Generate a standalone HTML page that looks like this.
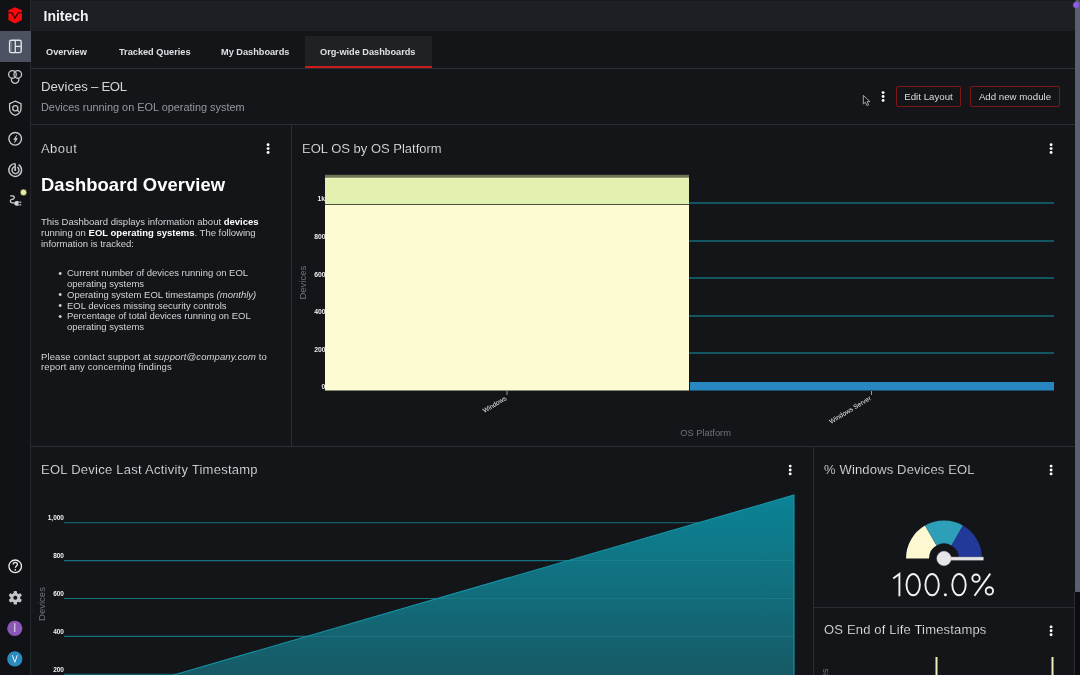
<!DOCTYPE html>
<html><head><meta charset="utf-8">
<style>
*{box-sizing:border-box;margin:0;padding:0}
body{will-change:transform}
html,body{width:1080px;height:675px;overflow:hidden;background:#131519;font-family:"Liberation Sans",sans-serif;color:#e6e7e9}
.abs{position:absolute}
#side{left:0;top:0;width:30px;height:675px;background:#101215}
#sideb{left:30px;top:0;width:1px;height:675px;background:#24272b}
#hdr{left:31px;top:0;width:1044px;height:31px;background:#1e1f24;border-top:1px solid #16171b}
#tabs{left:31px;top:31px;width:1044px;height:38px;background:#131519;border-bottom:1px solid #2b2e33}
.tab{position:absolute;top:46.8px;font-size:9.2px;font-weight:bold;color:#dfe0e3;white-space:nowrap}
#acttab{left:304.5px;top:36px;width:127px;height:32px;background:#1f2125;border-bottom:2px solid #cc1b1b}
.hl{position:absolute;height:1px;background:#2a2d31}
.vl{position:absolute;width:1px;background:#2a2d31}
.t{position:absolute;white-space:nowrap}
.ptitle{font-size:13px;color:#eeeff1;-webkit-text-stroke:0.22px #131519}
.kebab{position:absolute;width:3px}
.kebab i{display:block;width:2.6px;height:2.6px;border-radius:50%;background:#fff;margin-bottom:1.3px}
.btn{position:absolute;top:86px;height:21px;border:1.5px solid #7d1717;border-radius:2px;font-size:9.7px;color:#dcdde0;text-align:center;line-height:19px}
#scroll{left:1074.5px;top:0;width:5.5px;height:593px;background:#5b6070;border-radius:2px 2px 2px 2px}
#scrolltrack{left:1075px;top:592px;width:5px;height:83px;background:#0c0d10}
.body{font-size:9.5px;color:#d4d5d8;line-height:10.85px}
.body b{color:#fff}
.ylab{position:absolute;font-size:7px;font-weight:bold;color:#eee;text-align:right;width:30px}
</style></head><body>
<div id="side" class="abs"></div>
<div id="sideb" class="abs"></div>
<div class="abs" style="left:0;top:31px;width:31px;height:31px;background:#4d5263"></div>
<svg class="abs" style="left:0;top:0" width="30" height="675" viewBox="0 0 30 675">
  <!-- logo -->
  <path d="M15.1,7.2 L21.9,10.3 L21.9,19.9 L15.1,23.5 L8.4,19.9 L8.4,10.3 Z" fill="#fa0b0b"/>
  <path d="M8.4,12.7 L12.3,12.7 M17.9,12.7 L21.9,12.7" stroke="#2c0909" stroke-width="1"/>
  <path d="M12,12.9 L14.9,18.2 L18,12.9" fill="none" stroke="#2c0909" stroke-width="1.3"/>
  <rect x="14.4" y="9.6" width="1.3" height="5.6" fill="#fa0b0b"/>
  <!-- dashboard icon -->
  <rect x="9.6" y="40.2" width="11.6" height="12.4" rx="1.6" fill="none" stroke="#e4e5e8" stroke-width="1.4"/>
  <line x1="15.3" y1="40.2" x2="15.3" y2="52.6" stroke="#e4e5e8" stroke-width="1.3"/>
  <line x1="15.3" y1="46.4" x2="21.2" y2="46.4" stroke="#e4e5e8" stroke-width="1.3"/>
  <line x1="11.3" y1="41.5" x2="11.3" y2="51.5" stroke="#e4e5e8" stroke-width="0.6" opacity="0.5"/>
  <!-- rings -->
  <g fill="none" stroke="#c9cacd" stroke-width="1.3">
    <circle cx="12.45" cy="74.45" r="3.8"/>
    <circle cx="17.75" cy="74.45" r="3.8"/>
    <path d="M11.59,78.15 A3.8,3.8 0 1 0 18.61,78.15"/>
  </g>
  <!-- shield -->
  <g fill="none" stroke="#c9cacd" stroke-width="1.3">
    <path d="M15.3,101.2 L21,103.6 L21,108.5 C21,111.8 18.6,114.2 15.3,115.4 C12,114.2 9.6,111.8 9.6,108.5 L9.6,103.6 Z"/>
    <circle cx="15.3" cy="108.2" r="2.6"/>
    <path d="M17.3,110.2 L19,111.8"/>
  </g>
  <!-- bolt -->
  <circle cx="15.2" cy="138.8" r="6.3" fill="none" stroke="#c9cacd" stroke-width="1.4"/>
  <path d="M16.9,135.2 L13.7,139.5 L15.6,139.5 L14.5,142.6 L16.9,139.5 L17.1,138.1 L15.2,138.1 L16.9,135.2 Z" fill="#c9cacd" stroke="#c9cacd" stroke-width="0.6" stroke-linejoin="round"/>
  <!-- radar -->
  <g fill="none" stroke="#c9cacd" stroke-width="1.4">
    <path d="M18.6,164.6 A6.4,6.4 0 1 1 15.2,163.6"/>
    <path d="M17.3,167.1 A3.5,3.5 0 1 1 15.2,166.6"/>
    <line x1="15.2" y1="163.6" x2="15.2" y2="170"/>
  </g>
  <circle cx="15.2" cy="170" r="1.1" fill="#c9cacd"/>
  <!-- plug -->
  <path d="M10.2,195.8 L12.4,195.8 C13.9,195.8 14.4,196.8 14.2,197.8 C14,198.9 13.2,199.3 12,199.4 C10.8,199.5 10.3,200.2 10.3,201.1 C10.3,202.2 11,202.8 12.2,202.8 L14.4,202.8" fill="none" stroke="#d0d1d4" stroke-width="1.3"/>
  <path d="M18.6,200.9 L18.6,205.7 L16.6,205.7 C15,205.7 14.2,204.6 14.2,203.3 C14.2,202 15,200.9 16.6,200.9 Z" fill="#d0d1d4"/>
  <rect x="19.4" y="201.6" width="1.8" height="1.2" fill="#d0d1d4"/>
  <rect x="19.4" y="204.2" width="1.8" height="1.2" fill="#d0d1d4"/>
  <circle cx="23.5" cy="192.4" r="3.3" fill="#dfeea0" stroke="#2a1212" stroke-width="0.7"/>
  <!-- help -->
  <circle cx="15.2" cy="566.3" r="6.3" fill="none" stroke="#eeeef0" stroke-width="1.3"/>
  <path d="M13.2,564.6 C13.2,563.2 14.1,562.4 15.3,562.4 C16.6,562.4 17.4,563.3 17.4,564.4 C17.4,565.9 15.3,566 15.3,567.8" fill="none" stroke="#eeeef0" stroke-width="1.3"/>
  <circle cx="15.3" cy="569.9" r="0.8" fill="#eeeef0"/>
  <!-- gear -->
  <g transform="translate(15.3,597.8)">
    <circle r="4.9" fill="#c4c4c8"/>
    <g fill="#c4c4c8">
      <rect x="-1.7" y="-6.8" width="3.4" height="13.6" rx="0.9"/>
      <rect x="-1.7" y="-6.8" width="3.4" height="13.6" rx="0.9" transform="rotate(60)"/>
      <rect x="-1.7" y="-6.8" width="3.4" height="13.6" rx="0.9" transform="rotate(120)"/>
    </g>
    <circle r="2" fill="#101215"/>
  </g>
  <!-- avatars -->
  <circle cx="14.8" cy="628.3" r="7.6" fill="#8b57b6"/>
  <rect x="14.3" y="623.2" width="1" height="8.8" fill="#eee6f2"/>
  <circle cx="14.8" cy="658.9" r="7.6" fill="#2b8bc0"/>
  <path d="M12.3,655.2 L14.8,662.3 L17.3,655.2" fill="none" stroke="#f0f4f8" stroke-width="1"/>
</svg>


<div id="hdr" class="abs"></div>
<div class="t" style="left:43.5px;top:8px;font-size:14px;font-weight:bold;color:#f2f2f3">Initech</div>
<div id="tabs" class="abs"></div>
<div id="acttab" class="abs"></div>
<div class="tab" style="left:46px">Overview</div>
<div class="tab" style="left:119px">Tracked Queries</div>
<div class="tab" style="left:221px">My Dashboards</div>
<div class="tab" style="left:320px">Org-wide Dashboards</div>

<!-- page header -->
<div class="t" style="left:41px;top:79px;font-size:13.2px;word-spacing:-0.6px;color:#d5d6d9">Devices – <span style="letter-spacing:-0.3px">EOL</span></div>
<div class="t" style="left:41px;top:100.5px;font-size:10.9px;color:#96999f">Devices running on EOL operating system</div>
<div class="btn" style="left:896px;width:65px">Edit Layout</div>
<div class="btn" style="left:970px;width:90px">Add new module</div>
<div class="hl" style="left:31px;top:124px;width:1044px"></div>

<!-- grid lines -->
<div class="vl" style="left:291px;top:125px;height:321px"></div>
<div class="hl" style="left:31px;top:446px;width:1044px"></div>
<div class="vl" style="left:813px;top:447px;height:228px"></div>
<div class="hl" style="left:814px;top:607px;width:261px"></div>

<!-- About -->
<div class="t ptitle" style="left:41px;top:141.2px;letter-spacing:0.45px">About</div>
<div class="t" style="left:41px;top:174px;font-size:18.4px;font-weight:bold;color:#fff;letter-spacing:0.07px">Dashboard Overview</div>
<div class="t body" style="left:41px;top:217px">This Dashboard displays information about <b>devices</b><br>running on <b>EOL operating systems</b>. The following<br>information is tracked:</div>
<div class="t body" style="left:58.3px;top:267.8px;font-size:11px">•<br><br>•<br>•<br>•</div>
<div class="t body" style="left:67px;top:268px">Current number of devices running on EOL<br>operating systems<br>Operating system EOL timestamps <i>(monthly)</i><br>EOL devices missing security controls<br>Percentage of total devices running on EOL<br>operating systems</div>
<div class="t body" style="left:41px;top:351.5px;letter-spacing:0.12px">Please contact support at <i>support@company.com</i> to<br>report any concerning findings</div>

<!-- EOL OS by OS Platform -->
<div class="t ptitle" style="left:302px;top:141px">EOL OS by OS Platform</div>


<!-- chart1 svg -->
<svg class="abs" style="left:0;top:0" width="1080" height="675" viewBox="0 0 1080 675">
  <g stroke="#146c7b" stroke-width="1.4">
    <line x1="325" y1="203" x2="1054" y2="203"/>
    <line x1="325" y1="241" x2="1054" y2="241"/>
    <line x1="325" y1="278" x2="1054" y2="278"/>
    <line x1="325" y1="316" x2="1054" y2="316"/>
    <line x1="325" y1="353" x2="1054" y2="353"/>
  </g>
  <g font-family="Liberation Sans" font-size="6.8" font-weight="bold" fill="#ececec" text-anchor="end">
    <text x="325" y="201">1k</text>
    <text x="325.6" y="239">800</text>
    <text x="325.6" y="276.5">600</text>
    <text x="325.6" y="314">400</text>
    <text x="325.6" y="351.5">200</text>
    <text x="325.4" y="389">0</text>
  </g>
  <rect x="325" y="174.8" width="364" height="3" fill="#6d7355"/>
  <rect x="325" y="177.8" width="364" height="26.4" fill="#e3f1b0"/>
  <rect x="325" y="177.8" width="364" height="1" fill="#eef8c4"/>
  <rect x="325" y="204" width="364" height="1.1" fill="#4a4e3c"/>
  <rect x="325" y="205" width="364" height="185.5" fill="#fdfbd3"/>
  <rect x="690" y="382" width="364" height="8.5" fill="#2887c1"/>
  <line x1="507" y1="391" x2="507" y2="395" stroke="#9a9a9a" stroke-width="1"/>
  <line x1="871.5" y1="391" x2="871.5" y2="395" stroke="#9a9a9a" stroke-width="1"/>
  <g font-family="Liberation Sans" font-size="6.5" fill="#e8e8e8" text-anchor="end">
    <text transform="translate(507,399.5) rotate(-31)">Windows</text>
    <text transform="translate(871.5,399.5) rotate(-31)">Windows Server</text>
  </g>
  <text transform="translate(306,282.7) rotate(-90)" font-family="Liberation Sans" font-size="9.5" fill="#6f737c" text-anchor="middle">Devices</text>
  <text x="705.6" y="436" font-family="Liberation Sans" font-size="9.3" fill="#6f737c" text-anchor="middle">OS Platform</text>
</svg>

<!-- bottom left chart -->
<div class="t ptitle" style="left:41px;top:461.6px;letter-spacing:0.25px">EOL Device Last Activity Timestamp</div>
<svg class="abs" style="left:0;top:0" width="1080" height="675" viewBox="0 0 1080 675">
  <defs>
    <linearGradient id="ag" x1="0" y1="495" x2="0" y2="675" gradientUnits="userSpaceOnUse">
      <stop offset="0" stop-color="#0b8496"/>
      <stop offset="1" stop-color="#175a66"/>
    </linearGradient>
  </defs>
  <g stroke="#16717f" stroke-width="1.1">
    <line x1="64" y1="522.7" x2="794" y2="522.7"/>
    <line x1="64" y1="560.6" x2="794" y2="560.6"/>
    <line x1="64" y1="598.5" x2="794" y2="598.5"/>
    <line x1="64" y1="636.4" x2="794" y2="636.4"/>
    <line x1="64" y1="674.3" x2="794" y2="674.3"/>
  </g>
  <polygon points="175,675 794,495 794,675" fill="url(#ag)"/>
  <clipPath id="ac"><polygon points="175,675 794,495 794,675"/></clipPath>
  <g clip-path="url(#ac)" stroke="#3fb3c4" stroke-width="1" opacity="0.2">
    <line x1="64" y1="560.5" x2="794" y2="560.5"/>
    <line x1="64" y1="598.5" x2="794" y2="598.5"/>
    <line x1="64" y1="636.5" x2="794" y2="636.5"/>
  </g>
  <polyline points="172,675.5 794,495 794,675" fill="none" stroke="#1597aa" stroke-width="1.1"/>
  <g font-family="Liberation Sans" font-size="6.5" font-weight="bold" fill="#f0f0f0" text-anchor="end">
    <text x="64" y="520">1,000</text>
    <text x="64" y="558">800</text>
    <text x="64" y="596">600</text>
    <text x="64" y="634">400</text>
    <text x="64" y="672">200</text>
  </g>
  <text transform="translate(44.7,604) rotate(-90)" font-family="Liberation Sans" font-size="9.5" fill="#6f737c" text-anchor="middle">Devices</text>
</svg>

<!-- gauge panel -->
<div class="t ptitle" style="left:824px;top:461.7px;letter-spacing:0.16px">% Windows Devices EOL</div>
<svg class="abs" style="left:0;top:0" width="1080" height="675" viewBox="0 0 1080 675">
  <path d="M906,558.5 A38,38 0 0 1 925,525.6 L936.5,545.5 A15,15 0 0 0 929,558.5 Z" fill="#fbf8d2"/>
  <path d="M925,525.6 A38,38 0 0 1 963,525.6 L951.5,545.5 A15,15 0 0 0 936.5,545.5 Z" fill="#2e9fb8"/>
  <path d="M963,525.6 A38,38 0 0 1 982,558.5 L959,558.5 A15,15 0 0 0 951.5,545.5 Z" fill="#22399a"/>
  <rect x="944" y="557" width="39.5" height="3.2" fill="#e6e6e9" stroke="#8a8a90" stroke-width="0.5"/>
  <circle cx="944" cy="558.5" r="7.2" fill="#e6e6e9" stroke="#bdbdc2" stroke-width="0.5"/>
  <g fill="none" stroke="#f2f2f4" stroke-width="1.9">
    <path d="M893.2,578.6 L899.4,573.9 L899.4,596.2"/>
    <ellipse cx="913.2" cy="584.65" rx="6.7" ry="10.6"/>
    <ellipse cx="932.1" cy="584.65" rx="6.7" ry="10.6"/>
    <ellipse cx="959" cy="584.65" rx="6.7" ry="10.6"/>
    <ellipse cx="976" cy="578.2" rx="3.7" ry="3.7"/>
    <ellipse cx="989.4" cy="590.9" rx="3.7" ry="3.7"/>
    <path d="M990.3,573.6 L974.5,595.8"/>
  </g>
  <circle cx="945.4" cy="594.8" r="1.5" fill="#f2f2f4"/>
</svg>

<!-- OS End of Life -->
<div class="t ptitle" style="left:824px;top:622.3px;letter-spacing:0.17px">OS End of Life Timestamps</div>
<svg class="abs" style="left:0;top:0" width="1080" height="675" viewBox="0 0 1080 675">
  <rect x="935.5" y="657" width="2" height="18" fill="#eeeebb"/>
  <rect x="1051.5" y="657" width="2" height="18" fill="#eeeebb"/>
  <text transform="translate(828,678) rotate(-90)" font-family="Liberation Sans" font-size="9" fill="#6f7277">es</text>
</svg>

<svg class="abs" style="left:0;top:0" width="1080" height="675" viewBox="0 0 1080 675">
  <g fill="#ffffff"><circle cx="883.1" cy="92.6" r="1.45"/><circle cx="883.1" cy="96.5" r="1.45"/><circle cx="883.1" cy="100.4" r="1.45"/><circle cx="268.1" cy="144.7" r="1.45"/><circle cx="268.1" cy="148.6" r="1.45"/><circle cx="268.1" cy="152.5" r="1.45"/><circle cx="1051.1" cy="144.7" r="1.45"/><circle cx="1051.1" cy="148.6" r="1.45"/><circle cx="1051.1" cy="152.5" r="1.45"/><circle cx="790.2" cy="466.1" r="1.45"/><circle cx="790.2" cy="470.0" r="1.45"/><circle cx="790.2" cy="473.9" r="1.45"/><circle cx="1051.1" cy="466.1" r="1.45"/><circle cx="1051.1" cy="470.0" r="1.45"/><circle cx="1051.1" cy="473.9" r="1.45"/><circle cx="1051.1" cy="626.9" r="1.45"/><circle cx="1051.1" cy="630.8" r="1.45"/><circle cx="1051.1" cy="634.7" r="1.45"/></g>
  <path d="M863.3,95.4 L863.3,104 L865.4,102.2 L866.9,105.6 L868.6,104.9 L867.2,101.6 L869.9,101.6 Z" fill="#0e0f12" stroke="#b4b4b8" stroke-width="0.9" stroke-linejoin="round"/>
</svg>
<div id="scroll" class="abs"></div>
<div id="scrolltrack" class="abs"></div>
<div class="vl" style="left:1074px;top:592px;height:83px"></div>
<div class="abs" style="left:1072.5px;top:2px;width:6px;height:6px;border-radius:50%;background:#8c5ae6"></div>
</body></html>
